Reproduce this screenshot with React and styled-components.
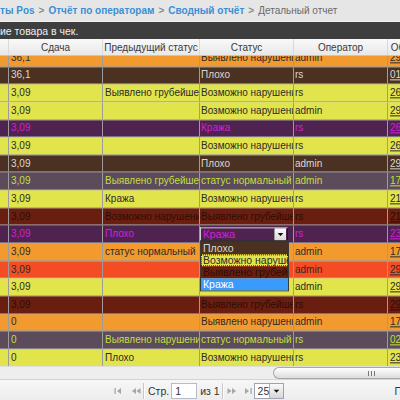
import React from "react";
import styled, { createGlobalStyle } from "styled-components";

const GlobalStyle = createGlobalStyle`
  html, body {
    margin: 0;
    padding: 0;
    background: #ffffff;
  }
  body {
    font-family: "Liberation Sans", Arial, sans-serif;
  }
`;

const ROW_THEMES = {
  orange: { bg: "#f29a2e", fg: "#2b2b2b" },
  brown: { bg: "#4a3121", fg: "#d8d8d8" },
  yellow: { bg: "#e2e44b", fg: "#2b2b2b" },
  purple: { bg: "#4e2350", fg: "#d41fd8" },
  slate: { bg: "#5b4b5b", fg: "#c3df3c" },
  maroon: { bg: "#6a1e0f", fg: "#2a0f08" },
  red: { bg: "#f44d24", fg: "#2b2b2b" },
};

const COLUMNS = "9px 94px 97px 94px 94px 80px";

const ROWS = [
  { theme: "orange", sum: "36,1", prev: "", status: "Выявлено нарушение", op: "admin", date: "29.11.2012" },
  { theme: "brown", sum: "36,1", prev: "", status: "Плохо", op: "rs", date: "01.12.2012" },
  { theme: "yellow", sum: "3,09", prev: "Выявлено грубейшее нарушение", status: "Возможно нарушение", op: "rs", date: "26.11.2012" },
  { theme: "yellow", sum: "3,09", prev: "", status: "Возможно нарушение", op: "admin", date: "29.11.2012" },
  { theme: "purple", sum: "3,09", prev: "", status: "Кража", op: "rs", date: "26.11.2012" },
  { theme: "yellow", sum: "3,09", prev: "", status: "Возможно нарушение", op: "rs", date: "26.11.2012" },
  { theme: "brown", sum: "3,09", prev: "", status: "Плохо", op: "admin", date: "29.11.2012" },
  { theme: "slate", sum: "3,09", prev: "Выявлено грубейшее нарушение", status: "статус нормальный", op: "admin", date: "17.11.2012" },
  { theme: "yellow", sum: "3,09", prev: "Кража", status: "Возможно нарушение", op: "rs", date: "21.11.2012" },
  { theme: "maroon", sum: "3,09", prev: "Возможно нарушение", status: "Выявлено грубейшее нарушение", op: "rs", date: "21.11.2012" },
  { theme: "purple", sum: "3,09", prev: "Плохо", status: "Кража", op: "rs", date: "23.11.2012", editing: true },
  { theme: "orange", sum: "3,09", prev: "статус нормальный", status: "", op: "admin", date: "17.11.2012" },
  { theme: "red", sum: "3,09", prev: "", status: "", op: "admin", date: "29.11.2012" },
  { theme: "yellow", sum: "3,09", prev: "", status: "", op: "admin", date: "29.11.2012" },
  { theme: "maroon", sum: "3,09", prev: "", status: "Выявлено грубейшее нарушение", op: "rs", date: "29.11.2012" },
  { theme: "orange", sum: "0", prev: "", status: "Выявлено нарушение", op: "admin", date: "17.11.2012" },
  { theme: "slate", sum: "0", prev: "Выявлено нарушение", status: "статус нормальный", op: "rs", date: "02.12.2012" },
  { theme: "yellow", sum: "0", prev: "Плохо", status: "Возможно нарушение", op: "rs", date: "23.11.2012" },
];

const OPTIONS = [
  { label: "Плохо", theme: "brown" },
  { label: "Возможно нарушение", theme: "yellow", focused: true },
  { label: "Выявлено грубейшее нарушение", theme: "maroon" },
  { label: "Кража", selected: true },
];

const Page = styled.div`
  width: 400px;
  height: 400px;
  overflow: hidden;
  display: flex;
  flex-direction: column;
  font-size: 10px;
  color: #2b2b2b;
`;

const Breadcrumbs = styled.div`
  height: 21px;
  flex: none;
  display: flex;
  align-items: center;
  gap: 4px;
  background: #e6e6e6;
  border-bottom: 1px solid #f2f2f2;
  white-space: nowrap;
  font-weight: bold;
`;

const Crumb = styled.span`
  color: ${(p) => (p.current ? "#6a6a6a" : "#3b8fd4")};
  font-weight: ${(p) => (p.current ? "normal" : "bold")};
`;

const Sep = styled.span`
  color: #8a8a8a;
`;

const TitleBar = styled.div`
  height: 17px;
  flex: none;
  display: flex;
  align-items: center;
  background: #3e3e3e;
  color: #efefef;
  font-size: 10.5px;
  white-space: nowrap;
`;

const HeaderRow = styled.div`
  height: 16px;
  flex: none;
  display: grid;
  grid-template-columns: ${COLUMNS};
  background: linear-gradient(#f9f9f9, #e8e8e8);
  border-bottom: 1px solid #c6c6c6;
  color: #3a3a3a;
`;

const HeaderCell = styled.div`
  display: flex;
  align-items: center;
  justify-content: ${(p) => (p.left ? "flex-start" : "center")};
  border-right: 1px solid #dadada;
  white-space: nowrap;
  overflow: hidden;
`;

const Body = styled.div`
  height: 310px;
  flex: none;
  overflow: hidden;
`;

const Scroller = styled.div`
  transform: translateY(-6.65px);
`;

const Row = styled.div`
  height: 17.65px;
  box-sizing: border-box;
  display: grid;
  grid-template-columns: ${COLUMNS};
  background: ${(p) => ROW_THEMES[p.theme].bg};
  color: ${(p) => ROW_THEMES[p.theme].fg};
  border-bottom: 1px solid #9c9c9c;
`;

const Cell = styled.div`
  position: relative;
  display: flex;
  align-items: center;
  padding-left: ${(p) => p.pad || 0}px;
  border-right: 1px solid #9c9c9c;
  white-space: nowrap;
  overflow: ${(p) => (p.open ? "visible" : "hidden")};
`;

const DateLink = styled.span`
  text-decoration: underline;
`;

const SelectBox = styled.div`
  width: 88px;
  height: 14px;
  box-sizing: border-box;
  display: flex;
  align-items: center;
  border: 1px solid #1d1d1d;
  border-top-color: #cfcfcf;
  border-left-color: #cfcfcf;
  background: ${ROW_THEMES.purple.bg};
  color: ${ROW_THEMES.purple.fg};
  font-size: 11px;
`;

const SelectText = styled.span`
  flex: 1;
  padding-left: 2px;
`;

const ArrowButton = styled.span`
  width: 11px;
  height: 12px;
  display: flex;
  align-items: center;
  justify-content: center;
  background: linear-gradient(#fdfdfd, #d8d8d8);
  border-left: 1px solid #9a9a9a;
  margin-right: 1px;
`;

const OptionList = styled.div`
  position: absolute;
  top: 15px;
  left: 0;
  width: 89px;
  box-sizing: border-box;
  border: 1px solid #3a3a3a;
  z-index: 10;
  font-size: 10.5px;
`;

const Option = styled.div`
  height: 12.25px;
  box-sizing: border-box;
  display: flex;
  align-items: center;
  padding-left: 2px;
  overflow: hidden;
  white-space: nowrap;
  background: ${(p) => (p.selected ? "#3a9bff" : ROW_THEMES[p.theme].bg)};
  color: ${(p) => (p.selected ? "#ffffff" : ROW_THEMES[p.theme].fg)};
  outline: ${(p) => (p.focused ? "1px dotted #222" : "none")};
  outline-offset: -1px;
`;

const ScrollBar = styled.div`
  height: 12px;
  flex: none;
  display: flex;
  background: #eeeeee;
  border-top: 1px solid #dedede;
`;

const ScrollThumb = styled.div`
  margin-left: 273px;
  flex: 1;
  display: flex;
  align-items: center;
  padding-left: 94px;
  box-sizing: border-box;
  border: 1px solid #a8a8a8;
  border-right: none;
  border-radius: 6px 0 0 6px;
  background: linear-gradient(#ffffff, #dcdcdc);
`;

const Grip = styled.span`
  width: 5px;
  height: 5px;
  border-left: 1px solid #777;
  border-right: 1px solid #777;
  position: relative;

  &::after {
    content: "";
    position: absolute;
    left: 2px;
    top: 0;
    height: 5px;
    border-left: 1px solid #777;
  }
`;

const Toolbar = styled.div`
  height: 22px;
  flex: none;
  display: flex;
  align-items: center;
  padding-left: 114px;
  background: linear-gradient(#f7f7f7, #ececec);
  border-top: 1px solid #d4d4d4;
  white-space: nowrap;
  color: #333;
  font-size: 10.5px;

  & > * {
    flex: none;
  }
`;

const ToolIcon = styled.span`
  width: 10px;
  margin-right: ${(p) => p.gap || 0}px;
  display: flex;
  align-items: center;
`;

const ToolSep = styled.span`
  width: 1px;
  height: 16px;
  background: #c8c8c8;
  border-right: 1px solid #fff;
  margin: 0 3px 0 2px;
`;

const PageInput = styled.span`
  width: 26px;
  height: 16px;
  box-sizing: border-box;
  margin: 0 3px 0 2px;
  padding-left: 3px;
  display: flex;
  align-items: center;
  background: #fff;
  border: 1px solid #b8bcc8;
`;

const SizeSelect = styled.span`
  width: 30px;
  height: 16px;
  box-sizing: border-box;
  margin-left: 2px;
  display: flex;
  align-items: center;
  background: #fff;
  border: 1px solid #9ea3b0;
`;

const SizeText = styled.span`
  flex: 1;
  padding-left: 3px;
`;

const SizeArrow = styled.span`
  width: 13px;
  height: 14px;
  display: flex;
  align-items: center;
  justify-content: center;
  background: linear-gradient(#fafafa, #d6d6d6);
  border-left: 1px solid #b0b0b0;
`;

const DisplayInfo = styled.span`
  margin-left: 111px;
`;

const Tri = ({ size = 7 }) => (
  <svg width={size} height={size * 0.6} viewBox="0 0 10 6">
    <path d="M1 1h8L5 5.5z" fill="#111" />
  </svg>
);

const NavIcon = ({ dir, bar }) => {
  const left = dir === "left";
  return (
    <svg width="10" height="8" viewBox="0 0 10 8">
      {bar && <rect x={left ? 0.5 : 8.5} y="1" width="1.2" height="6" fill="#a0a0a0" />}
      {left ? (
        <>
          <path d={bar ? "M7 1v6L3 4z" : "M5 1v6L1 4z"} fill="#a6a6a6" />
          {!bar && <path d="M9.5 1v6L5.5 4z" fill="#a6a6a6" />}
        </>
      ) : (
        <>
          <path d={bar ? "M3 1v6l4-3z" : "M0.5 1v6l4-3z"} fill="#a6a6a6" />
          {!bar && <path d="M5 1v6l4-3z" fill="#a6a6a6" />}
        </>
      )}
    </svg>
  );
};

const StatusCell = ({ row }) => {
  if (!row.editing) {
    return <Cell pad={1}>{row.status}</Cell>;
  }
  return (
    <Cell open>
      <SelectBox>
        <SelectText>{row.status}</SelectText>
        <ArrowButton>
          <Tri />
        </ArrowButton>
      </SelectBox>
      <OptionList>
        {OPTIONS.map((o) => (
          <Option
            key={o.label}
            theme={o.theme || "yellow"}
            selected={o.selected}
            focused={o.focused}
          >
            {o.label}
          </Option>
        ))}
      </OptionList>
    </Cell>
  );
};

export default function App() {
  return (
    <Page>
      <GlobalStyle />
      <Breadcrumbs>
        <Crumb>ты Pos</Crumb>
        <Sep>&gt;</Sep>
        <Crumb>Отчёт по операторам</Crumb>
        <Sep>&gt;</Sep>
        <Crumb>Сводный отчёт</Crumb>
        <Sep>&gt;</Sep>
        <Crumb current>Детальный отчет</Crumb>
      </Breadcrumbs>
      <TitleBar>ие товара в чек.</TitleBar>
      <HeaderRow>
        <HeaderCell />
        <HeaderCell>Сдача</HeaderCell>
        <HeaderCell>Предыдущий статус</HeaderCell>
        <HeaderCell>Статус</HeaderCell>
        <HeaderCell>Оператор</HeaderCell>
        <HeaderCell left>&nbsp;Обработан</HeaderCell>
      </HeaderRow>
      <Body>
        <Scroller>
          {ROWS.map((row, i) => (
            <Row key={i} theme={row.theme}>
              <Cell />
              <Cell pad={2}>{row.sum}</Cell>
              <Cell pad={2}>{row.prev}</Cell>
              <StatusCell row={row} />
              <Cell pad={1}>{row.op}</Cell>
              <Cell pad={2}>
                <DateLink>{row.date}</DateLink>
              </Cell>
            </Row>
          ))}
        </Scroller>
      </Body>
      <ScrollBar>
        <ScrollThumb>
          <Grip />
        </ScrollThumb>
      </ScrollBar>
      <Toolbar>
        <ToolIcon gap={7}>
          <NavIcon dir="left" bar />
        </ToolIcon>
        <ToolIcon>
          <NavIcon dir="left" />
        </ToolIcon>
        <ToolSep />
        <span>Стр.</span>
        <PageInput>1</PageInput>
        <span>из 1</span>
        <ToolSep />
        <ToolIcon gap={5}>
          <NavIcon dir="right" />
        </ToolIcon>
        <ToolIcon>
          <NavIcon dir="right" bar />
        </ToolIcon>
        <SizeSelect>
          <SizeText>25</SizeText>
          <SizeArrow>
            <Tri />
          </SizeArrow>
        </SizeSelect>
        <DisplayInfo>Показано 1 - 18 из 18</DisplayInfo>
      </Toolbar>
    </Page>
  );
}
